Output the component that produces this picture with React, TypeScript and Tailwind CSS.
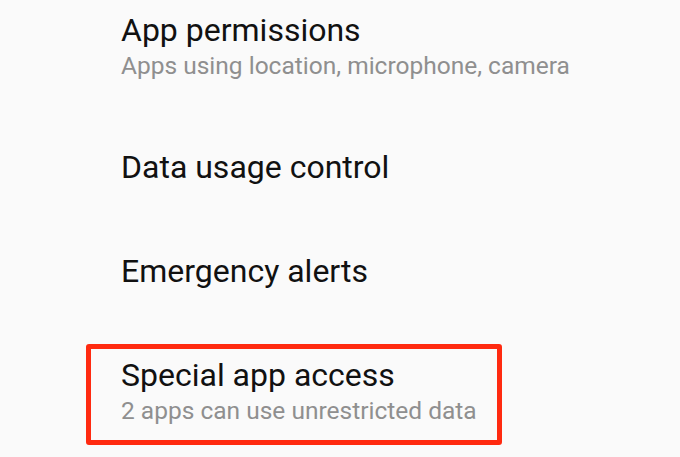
export default function App() {
  return (
    <div className="h-[457px] w-[680px] overflow-hidden bg-[#fafafa] font-['Roboto',sans-serif]">
      <div className="pl-[121px] pt-[12px]">
        <div className="text-[32px] leading-[36px] text-[#111]">App permissions</div>
        <div className="mt-[3px] text-[24.5px] leading-[30px] text-[#8f8f8f]">Apps using location, microphone, camera</div>
      </div>
      <div className="pl-[121px] pt-[68px]">
        <div className="text-[32px] leading-[36px] text-[#111]">Data usage control</div>
      </div>
      <div className="pl-[121px] pt-[68px]">
        <div className="text-[32px] leading-[36px] text-[#111]">Emergency alerts</div>
      </div>
      <div className="ml-[86px] mt-[55px] w-[416px] rounded-[3px] border-[5px] border-[#ff2a10] pl-[30px] pt-[8px] pb-[14px]">
        <div className="text-[32px] leading-[36px] text-[#111]">Special app access</div>
        <div className="mt-[3px] text-[24.5px] leading-[30px] text-[#8f8f8f]">2 apps can use unrestricted data</div>
      </div>
    </div>
  )
}
